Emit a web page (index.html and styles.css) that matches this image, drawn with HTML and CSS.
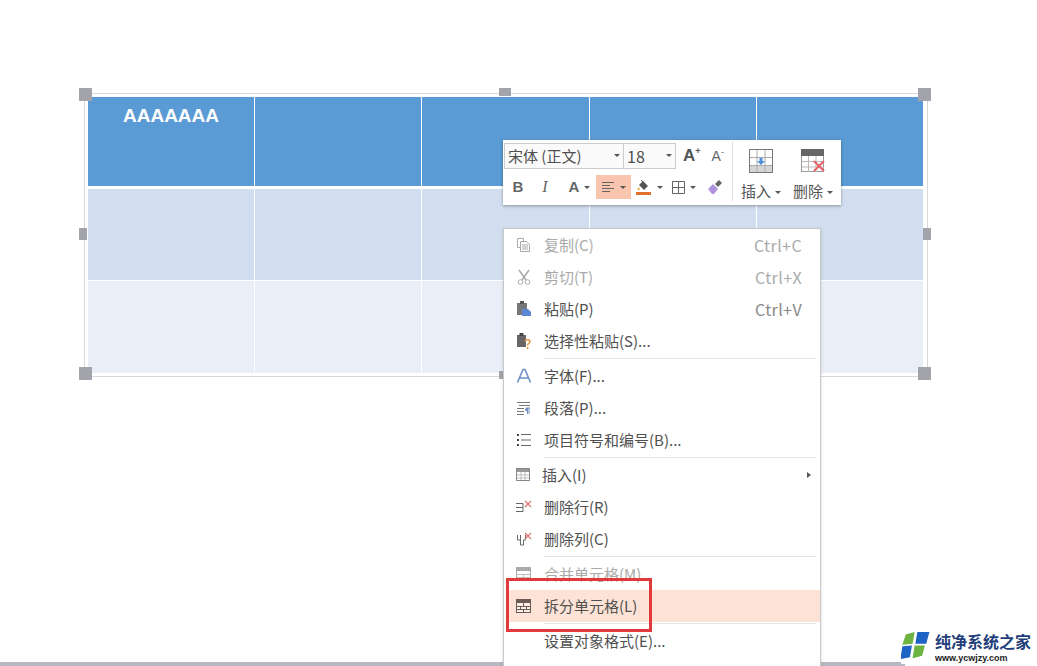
FILE: index.html
```html
<!DOCTYPE html>
<html lang="zh-CN">
<head>
<meta charset="utf-8">
<title>拆分单元格</title>
<link rel="stylesheet" href="styles.css">
</head>
<body>
<div class="page">

  <table class="slide_table">
    <tr class="row_head"><td>AAAAAAA</td><td></td><td></td><td></td><td></td></tr>
    <tr class="row_a"><td></td><td></td><td></td><td></td><td></td></tr>
    <tr class="row_b"><td></td><td></td><td></td><td></td><td></td></tr>
  </table>

  <!-- selection frame + handles -->
  <div class="frame"></div>
  <i class="handle h_tl"></i><i class="handle h_tc"></i><i class="handle h_tr"></i>
  <i class="handle h_ml"></i><i class="handle h_mr"></i>
  <i class="handle h_bl"></i><i class="handle h_bc"></i><i class="handle h_br"></i>

  <div class="bottom_bar"></div>

  <!-- floating toolbar -->
  <div class="toolbar">
    <div class="tb_left">
      <div class="combos">
        <div class="combo combo_font"><span>宋体 (正文)</span><b class="caret"></b></div>
        <div class="combo combo_size"><span>18</span><b class="caret"></b></div>
        <span class="grow_btn">A<sup>+</sup></span>
        <span class="shrink_btn">A<sup>-</sup></span>
      </div>
      <div class="tools">
        <span class="tool tool_b">B</span>
        <span class="tool tool_i">I</span>
        <span class="tool tool_a">A<b class="caret"></b></span>
        <span class="tool tool_align">
          <svg width="13" height="11" viewBox="0 0 13 11"><path d="M0 .5h12M0 3.500h8M0 6.500h12M0 9.500h8" stroke="#666" fill="none"/></svg>
          <b class="caret"></b>
        </span>
        <span class="tool tool_fill">
          <svg width="17" height="17" viewBox="0 0 17 17"><path d="M4 6l4-4 5 5-4 4z" fill="#555"/><path d="M6 1l2 2" stroke="#555"/><path d="M2 11l2-3 1 3z" fill="#e9b04a"/><rect x="1" y="13" width="15" height="3" fill="#e0702c"/></svg>
          <b class="caret"></b>
        </span>
        <span class="tool tool_border">
          <svg width="13" height="13" viewBox="0 0 13 13"><path d="M.5.5h12v12H.5zM6.500.5v12M.5 6.500h12" stroke="#666" fill="none"/></svg>
          <b class="caret"></b>
        </span>
        <span class="tool tool_brush">
          <svg width="16" height="16" viewBox="0 0 16 16"><path d="M1 10l5-5 5 5-4 5H5z" fill="#b093dc"/><path d="M8 5l4-4 3 3-4 4z" fill="#666"/></svg>
        </span>
      </div>
    </div>
    <div class="tb_right">
      <div class="big_btn big_insert">
        <svg width="24" height="24" viewBox="0 0 24 24"><rect x=".5" y=".5" width="23" height="23" fill="#fff" stroke="#777"/><rect x="1" y="17" width="22" height="6" fill="#d5d5d5"/><path d="M8 1v22M16 1v22M1 8.500h22M1 16.500h22" stroke="#aaa" fill="none"/><path d="M10.500 9h3v3H16l-4 4-4-4h2.500z" fill="#4f8fdc"/></svg>
        <span>插入<b class="caret"></b></span>
      </div>
      <div class="big_btn big_delete">
        <svg width="24" height="24" viewBox="0 0 24 24"><rect x=".5" y=".5" width="22" height="22" fill="#fff" stroke="#999"/><rect x="0" y="0" width="23" height="7" fill="#666"/><path d="M7.500 7v16M15 7v16M1 12.500h22M1 18h22" stroke="#bbb" fill="none"/><path d="M13 12l10 10M23 12L13 22" stroke="#e8606a" stroke-width="2" fill="none"/></svg>
        <span>删除<b class="caret"></b></span>
      </div>
    </div>
  </div>

  <!-- context menu -->
  <div class="menu">
    <div class="item off">
      <svg class="ico" viewBox="0 0 16 16"><path d="M1.500 1.500h6v3M4.500 4.500h6l3 3v7h-9zM1.500 1.500v9h3M6 8h6M6 10h6M6 12h6" stroke="#aaa" fill="none"/></svg>
      <span class="lbl">复制(C)</span><span class="key">Ctrl+C</span>
    </div>
    <div class="item off">
      <svg class="ico" viewBox="0 0 16 16"><path d="M3 1l7 10M13 1L6 11" stroke="#aaa" stroke-width="1.500" fill="none"/><circle cx="4.500" cy="13" r="2.300" stroke="#aaa" fill="none"/><circle cx="11.500" cy="13" r="2.300" stroke="#aaa" fill="none"/></svg>
      <span class="lbl">剪切(T)</span><span class="key">Ctrl+X</span>
    </div>
    <div class="item">
      <svg class="ico" viewBox="0 0 16 16"><rect x="1" y="2" width="10" height="12" fill="#777"/><rect x="4" y="0" width="4" height="3" fill="#555"/><path d="M6 8h6l3 3v4H6z" fill="#5b87d6"/></svg>
      <span class="lbl">粘贴(P)</span><span class="key">Ctrl+V</span>
    </div>
    <div class="item">
      <svg class="ico" viewBox="0 0 16 16"><rect x="1" y="2" width="9" height="12" fill="#666"/><rect x="3.500" y="0" width="4" height="3" fill="#444"/><path d="M9 8.500c0-2.500 5-2.500 5 0 0 2-2.500 2-2.500 4" stroke="#e0903c" stroke-width="1.500" fill="none"/><rect x="10.800" y="14" width="1.500" height="2" fill="#e0903c"/></svg>
      <span class="lbl">选择性粘贴(S)...</span>
    </div>
    <div class="sep"></div>
    <div class="item">
      <svg class="ico" viewBox="0 0 16 16"><path d="M1.500 14.500L7 1.500h2l5.500 13M4 10h8" stroke="#6f8fc6" stroke-width="1.600" fill="none"/></svg>
      <span class="lbl">字体(F)...</span>
    </div>
    <div class="item">
      <svg class="ico" viewBox="0 0 16 16"><path d="M1 2.500h13M3 5.500h11M1 8.500h7M1 11.500h7M1 14.500h7" stroke="#777" fill="none"/><path d="M10 8h4M11.500 8v6M13 8v6" stroke="#6f8fc6" fill="none"/><circle cx="10.500" cy="9.500" r="1.500" fill="#6f8fc6"/></svg>
      <span class="lbl">段落(P)...</span>
    </div>
    <div class="item">
      <svg class="ico" viewBox="0 0 16 16"><path d="M5 2.500h10M5 8h10M5 13.500h10" stroke="#666" fill="none"/><path d="M1 2h2v2H1zM1 7h2v2H1zM1 12h2v2H1z" fill="#444"/></svg>
      <span class="lbl">项目符号和编号(B)...</span>
    </div>
    <div class="sep"></div>
    <div class="item">
      <svg class="ico" viewBox="0 0 16 16"><rect x=".5" y="1.500" width="13" height="12" fill="#fff" stroke="#888"/><rect x="1" y="2" width="12" height="3" fill="#999"/><path d="M1 8h12M1 11h12M5 5v8M9 5v8" stroke="#bbb" fill="none"/></svg>
      <span class="lbl lbl_tight">插入(I)</span><b class="arrow"></b>
    </div>
    <div class="item">
      <svg class="ico" viewBox="0 0 16 16"><path d="M0 4.500h7v4H1M0 8.500h7v4H0" stroke="#666" fill="none"/><path d="M9 2l6 6M15 2L9 8" stroke="#e0707a" stroke-width="1.200" fill="none"/></svg>
      <span class="lbl">删除行(R)</span>
    </div>
    <div class="item">
      <svg class="ico" viewBox="0 0 16 16"><path d="M1.500 4v5h3V4M4.500 9v5h3V9h2V4" stroke="#666" fill="none"/><path d="M9 2l6 6M15 2L9 8" stroke="#e0707a" stroke-width="1.200" fill="none"/></svg>
      <span class="lbl">删除列(C)</span>
    </div>
    <div class="sep"></div>
    <div class="item off">
      <svg class="ico" viewBox="0 0 16 16"><rect x=".5" y="1.500" width="14" height="13" fill="#fff" stroke="#aaa"/><rect x="1" y="2" width="13" height="3" fill="#aaa"/><path d="M1 8.500h13M1 11.500h13M7.500 8.500v6" stroke="#bbb" fill="none"/></svg>
      <span class="lbl">合并单元格(M)</span>
    </div>
    <div class="item hot">
      <svg class="ico" viewBox="0 0 16 16"><rect x=".5" y="1.500" width="14" height="13" fill="#fbeee6" stroke="#6b5a55"/><rect x="1" y="2" width="13" height="3" fill="#6b5a55"/><path d="M1 8.500h13M1 11.500h13M7.500 5v3M4.500 8.500v3M10.500 8.500v3M7.500 11.500v3" stroke="#6b5a55" fill="none"/></svg>
      <span class="lbl">拆分单元格(L)</span>
    </div>
    <div class="sep"></div>
    <div class="item">
      <span class="ico"></span>
      <span class="lbl">设置对象格式(E)...</span>
    </div>
  </div>

  <div class="red_box"></div>

  <!-- site logo -->
  <div class="logo">
    <svg width="30" height="27" viewBox="0 0 44 32" preserveAspectRatio="none"><path d="M7 3l13-3-3 14-15 1z" fill="#6db33f"/><path d="M24 0l18-1-5 15-16 0z" fill="#1d63c4"/><path d="M2 17l14-1-3 14-14 2z" fill="#1d63c4"/><path d="M20 16l15 0-4 12-14 3z" fill="#6db33f"/></svg>
    <div class="logo_txt">
      <div class="logo_cn">纯净系统之家</div>
      <div class="logo_en">www.ycwjzy.com</div>
    </div>
  </div>

</div>
</body>
</html>
```

FILE: styles.css
```css
html, body {
	margin: 0;
	padding: 0;
	background: #fff;
}
.page {
	position: relative;
	width: 1037px;
	height: 666px;
	overflow: hidden;
	padding: 97px 0 0 88px;
	box-sizing: border-box;
	font: 15px/20px "Noto Sans CJK SC", "Liberation Sans", sans-serif;
	color: #505050;
}

/* table on the slide */
.slide_table {
	border-collapse: separate;
	border-spacing: 0;
	table-layout: fixed;
	width: 835px;
}
.slide_table td {
	width: 166px;
	padding: 0;
	border-right: 1px solid #fff;
	vertical-align: top;
	text-align: center;
}
.slide_table td:nth-child(3) {
	width: 167px;
}
.slide_table td:last-child {
	width: 166px;
	border-right: 0;
}
.row_head td {
	height: 89px;
	background: #5b9bd5;
	color: #fff;
	font: bold 19px/37px "Liberation Sans", sans-serif;
	border-bottom: 3px solid #fff;
}
.row_a td {
	height: 91px;
	background: #d2deef;
	border-bottom: 1px solid #fff;
}
.row_b td {
	height: 92px;
	background: #eaeff7;
}

.frame {
	position: absolute;
	left: 84px;
	top: 93px;
	width: 842px;
	height: 282px;
	border: 1px solid #d8d8d8;
}
.handle {
	position: absolute;
	width: 13px;
	height: 13px;
	background: #a3a3ab;
}
.h_tl { left: 79px; top: 88px; }
.h_tc { left: 499px; top: 88px; width: 12px; height: 8px; }
.h_tr { left: 918px; top: 88px; }
.h_ml { left: 79px; top: 228px; width: 8px; height: 12px; }
.h_mr { left: 923px; top: 228px; width: 8px; height: 12px; }
.h_bl { left: 79px; top: 367px; }
.h_bc { left: 499px; top: 371px; width: 12px; height: 8px; }
.h_br { left: 918px; top: 367px; }

/* floating toolbar */
.toolbar {
	position: absolute;
	left: 503px;
	top: 140px;
	width: 338px;
	height: 65px;
	box-sizing: border-box;
	background: #fff;
	box-shadow: 0 1px 3px rgba(0, 0, 0, .35);
	display: flex;
}
.tb_left {
	width: 228px;
	padding: 2px 0 0 1px;
	border-right: 1px solid #ddd;
	margin: 2px 0;
	height: 57px;
}
.combos {
	display: flex;
	align-items: center;
	height: 27px;
	margin-top: -2px;
}
.combo {
	height: 26px;
	box-sizing: border-box;
	border: 1px solid #ccc;
	background: #fafafa;
	display: flex;
	align-items: center;
	justify-content: space-between;
	padding: 0 3px;
	font-size: 15px;
	color: #505050;
}
.combo_font { width: 120px; }
.combo_size { width: 52px; border-left: 0; font-size: 16px; }
.caret {
	display: inline-block;
	width: 0;
	height: 0;
	border: 3px solid transparent;
	border-top: 3px solid #555;
	border-bottom: 0;
	margin-left: 4px;
	vertical-align: middle;
}
.grow_btn, .shrink_btn {
	font-family: "Liberation Sans", sans-serif;
	color: #555;
	display: block;
	white-space: nowrap;
}
.grow_btn {
	font-size: 17px;
	margin-left: 7px;
	font-weight: bold;
}
.shrink_btn {
	font-size: 14px;
	margin-left: 11px;
	color: #666;
}
.combos sup {
	font-size: 9px;
	line-height: 0;
}
.tools {
	display: flex;
	align-items: center;
	height: 24px;
	margin-top: 6px;
	font-family: "Liberation Sans", sans-serif;
	font-weight: bold;
	color: #666;
}
.tool {
	display: flex;
	align-items: center;
	justify-content: center;
	height: 24px;
	box-sizing: border-box;
}
.tool .caret { margin-left: 5px; }
.tool_b { width: 28px; font-size: 15px; }
.tool_i { width: 26px; font-family: "Liberation Serif", serif; font-style: italic; font-weight: normal; font-size: 16px; }
.tool_a { width: 38px; font-size: 15px; padding-left: 5px; }
.tool_align { width: 35px; background: #f9c5ae; }
.tool_fill { width: 36px; }
.tool_border { width: 33px; }
.tool_brush { width: 26px; margin-left: 2px; }
.tb_right {
	display: flex;
	padding-left: 2px;
}
.big_btn {
	width: 52px;
	display: flex;
	flex-direction: column;
	align-items: center;
	padding-top: 9px;
}
.big_btn span {
	margin-top: 8px;
	font-size: 15px;
	line-height: 20px;
	color: #555;
	white-space: nowrap;
}
.big_btn svg { display: block; }

/* context menu */
.menu {
	position: absolute;
	left: 503px;
	top: 228px;
	width: 318px;
	height: 460px;
	box-sizing: border-box;
	background: #fff;
	border: 1px solid #c8c8c8;
	box-shadow: 0 1px 3px rgba(0, 0, 0, .15);
	padding: 0 0 0 4px;
}
.item {
	height: 32px;
	display: flex;
	align-items: center;
	padding-left: 8px;
	padding-right: 18px;
}
.ico {
	width: 16px;
	height: 16px;
	flex: none;
	display: block;
}
.lbl {
	margin-left: 12px;
	flex: 1;
	white-space: nowrap;
}
.lbl_tight { margin-left: 10px; }
.key { color: #888; font-size: 16px; letter-spacing: .4px; }
.off .lbl, .off .key { color: #aaa; }
.hot { background: #fde3d6; }
.sep {
	height: 1px;
	margin: 1px 4px 1px 36px;
	background: #e6e6e6;
}
.arrow {
	width: 0;
	height: 0;
	border: 3px solid transparent;
	border-left: 4px solid #555;
	border-right: 0;
	margin-right: -9px;
}
.red_box {
	position: absolute;
	left: 506px;
	top: 578px;
	width: 140px;
	height: 48px;
	border: 3px solid #e23a3c;
}

.bottom_bar {
	position: absolute;
	left: 0;
	bottom: 0;
	width: 905px;
	height: 4px;
	background: #b8b8c2;
}
.logo {
	position: absolute;
	left: 901px;
	top: 632px;
	display: flex;
	align-items: flex-start;
	gap: 4px;
	color: #1f3f7a;
	background: #fff;
	white-space: nowrap;
}
.logo_cn {
	font: bold 16px/18px "Noto Sans CJK SC", sans-serif;
}
.logo_en {
	font: bold 9px/11px "Liberation Sans", sans-serif;
	color: #222;
	margin-top: 3px;
}
```
